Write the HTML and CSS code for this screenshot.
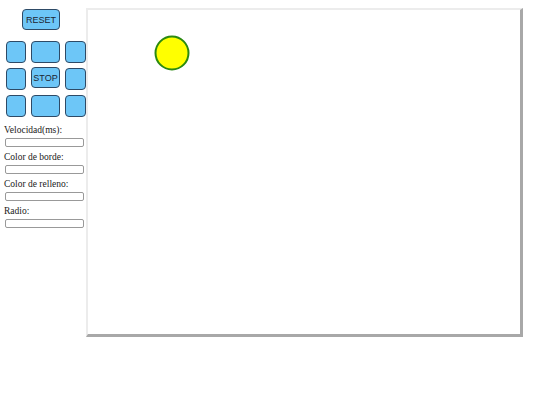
FILE: index.html
```html
<!DOCTYPE html>
<html>
<head>
<meta charset="utf-8">
<link rel="stylesheet" href="styles.css">
</head>
<body>
<div class="app">
  <div class="panel">
    <button class="btn reset">RESET</button>
    <div class="pad">
      <button class="btn"></button>
      <button class="btn"></button>
      <button class="btn"></button>
      <button class="btn"></button>
      <button class="btn stop">STOP</button>
      <button class="btn"></button>
      <button class="btn"></button>
      <button class="btn"></button>
      <button class="btn"></button>
    </div>
    <div class="field">
      <label>Velocidad(ms):</label>
      <input type="text">
    </div>
    <div class="field">
      <label>Color de borde:</label>
      <input type="text">
    </div>
    <div class="field">
      <label>Color de relleno:</label>
      <input type="text">
    </div>
    <div class="field">
      <label>Radio:</label>
      <input type="text">
    </div>
  </div>
  <div class="canvas">
    <svg width="432" height="324" viewBox="0 0 432 324">
      <circle cx="84" cy="43" r="16.5" fill="#ffff00" stroke="#2a8a10" stroke-width="2"/>
    </svg>
  </div>
</div>
</body>
</html>
```

FILE: styles.css
```css
html, body {
  margin: 0;
  padding: 0;
  background: #ffffff;
}
.app {
  display: flex;
  align-items: flex-start;
  padding: 8px 0 0 4px;
}
.panel {
  width: 82px;
  flex-shrink: 0;
  display: flex;
  flex-direction: column;
  font-family: "Liberation Serif", serif;
}
.btn {
  background: #6dc6f7;
  border: 1px solid #2e4a66;
  border-radius: 4px;
  font-family: "Liberation Sans", Arial, sans-serif;
  font-size: 9px;
  color: #1c2430;
  padding: 0;
  margin: 0;
  height: 21px;
}
.reset {
  width: 38px;
  margin-left: 18px;
  margin-top: 1px;
}
.pad {
  display: grid;
  grid-template-columns: 20px 29px 21px;
  grid-template-rows: 22px 22px 22px;
  column-gap: 5px;
  row-gap: 5px;
  margin: 11px 0 0 2px;
}
.pad .btn {
  height: 22px;
}
.pad .stop {
  height: 21px;
  margin-top: -1px;
}
.field {
  display: flex;
  flex-direction: column;
}
.pad + .field {
  margin-top: 8px;
}
.field + .field {
  margin-top: 5px;
}
.field label {
  font-size: 9.5px;
  color: #1a1a1a;
  line-height: 11px;
  height: 11px;
}
.field input {
  width: 79px;
  height: 9px;
  box-sizing: border-box;
  margin: 2px 0 0 1px;
  border: 1px solid #999;
  border-radius: 2px;
  padding: 0;
  background: #fff;
}
.canvas {
  border-style: solid;
  border-width: 2px 3px 3px 2px;
  border-color: #ececec #a8a8a8 #a8a8a8 #ececec;
  background: #fff;
  line-height: 0;
}
.canvas svg {
  display: block;
}
```
